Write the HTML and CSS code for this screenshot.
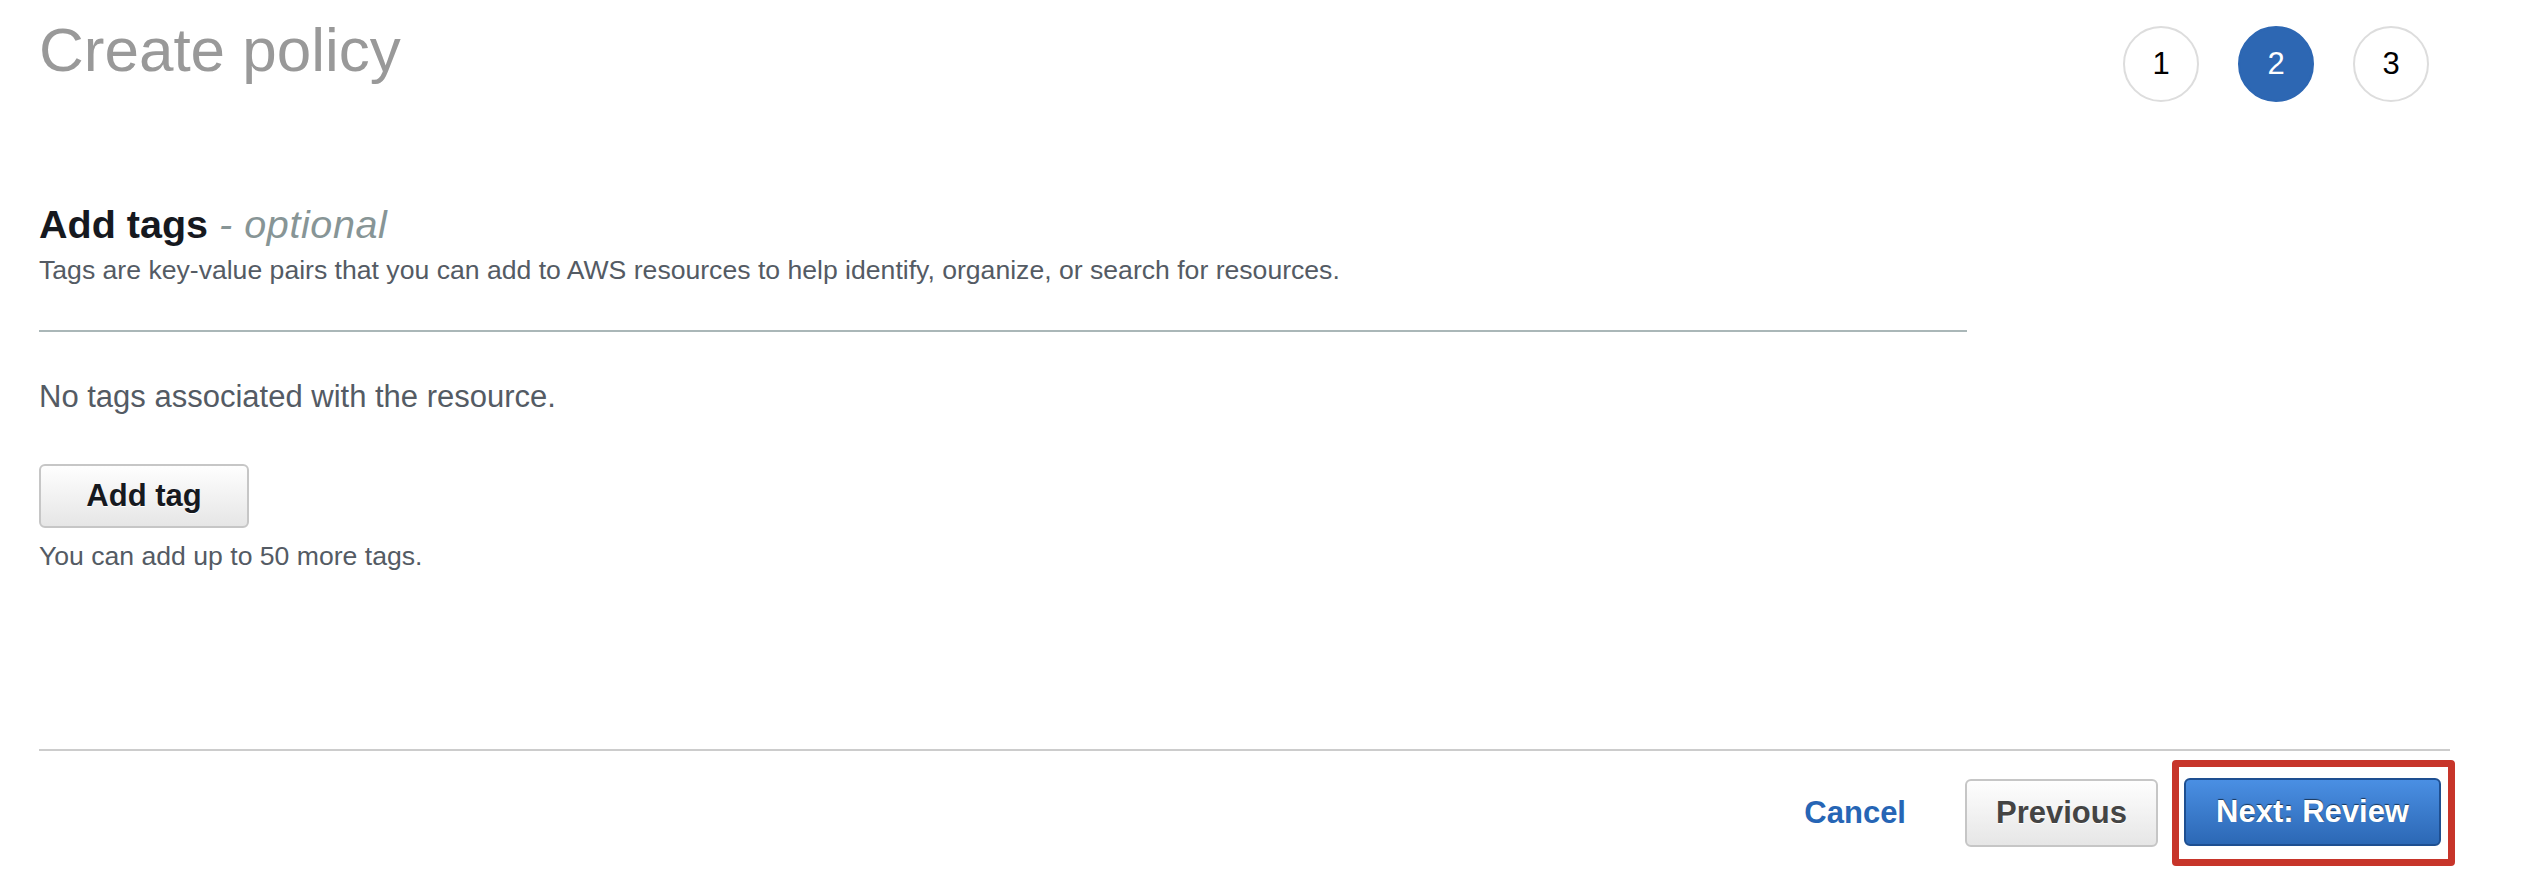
FILE: index.html
```html
<!DOCTYPE html>
<html lang="en">
<head>
    <meta charset="UTF-8">
    <meta name="viewport" content="width=device-width, initial-scale=1.0">
    <title>Create policy</title>
    <link rel="stylesheet" href="styles.css">
</head>
<body>
    <div class="page">
        <div class="header">
            <h1 class="title">Create policy</h1>
            <div class="steps">
                <div class="step">1</div>
                <div class="step active">2</div>
                <div class="step">3</div>
            </div>
        </div>

        <div class="tags-section">
            <h2 class="section-title">Add tags <span class="optional">- optional</span></h2>
            <p class="section-desc">Tags are key-value pairs that you can add to AWS resources to help identify, organize, or search for resources.</p>
            <div class="divider"></div>
            <p class="empty-text">No tags associated with the resource.</p>
            <button class="btn btn-default add-tag">Add tag</button>
            <p class="hint">You can add up to 50 more tags.</p>
        </div>

        <div class="footer">
            <a class="cancel" href="#">Cancel</a>
            <button class="btn btn-default prev">Previous</button>
            <span class="highlight">
                <button class="btn btn-primary next">Next: Review</button>
            </span>
        </div>
    </div>
</body>
</html>
```

FILE: styles.css
```css
body {
    font-family: "Liberation Sans", Arial, sans-serif;
    margin: 0;
    padding: 0;
    background-color: #fff;
}
.page {
    padding: 0 74px 0 39px;
}
.header {
    display: flex;
    justify-content: space-between;
    align-items: flex-start;
    padding-top: 13px;
}
.title {
    margin: 0;
    font-size: 62px;
    line-height: 74px;
    font-weight: normal;
    color: #999;
}
.steps {
    display: flex;
    gap: 39px;
    margin-top: 13px;
    margin-right: 21px;
}
.step {
    width: 72px;
    height: 72px;
    border: 2px solid #ddd;
    border-radius: 50%;
    display: flex;
    align-items: center;
    justify-content: center;
    font-size: 31px;
    color: #000;
}
.step.active {
    background-color: #2d67b3;
    border-color: #2d67b3;
    color: #fff;
}
.tags-section {
    width: 1928px;
    margin-top: 98px;
}
.section-title {
    margin: 0;
    font-size: 39.5px;
    line-height: 48px;
    font-weight: bold;
    color: #16191f;
}
.optional {
    font-weight: normal;
    font-style: italic;
    letter-spacing: 0.6px;
    color: #879596;
}
.section-desc {
    margin: 6px 0 0;
    font-size: 26.6px;
    line-height: 32px;
    color: #545b64;
}
.divider {
    height: 2px;
    background-color: #aab7b8;
    margin-top: 44px;
}
.empty-text {
    margin: 46px 0 0;
    font-size: 31px;
    line-height: 38px;
    color: #545b64;
}
.btn {
    font-family: "Liberation Sans", Arial, sans-serif;
    font-weight: bold;
    border-radius: 6px;
    cursor: pointer;
}
.btn-default {
    border: 2px solid #c6c6c6;
    background: linear-gradient(#fefefe, #e6e6e6);
    color: #16191f;
    text-shadow: 0 1px 0 #fff;
}
.add-tag {
    display: block;
    margin-top: 48px;
    width: 210px;
    height: 64px;
    font-size: 31px;
}
.hint {
    margin: 12px 0 0;
    font-size: 26.6px;
    line-height: 32px;
    color: #545b64;
}
.footer {
    margin-top: 177px;
    border-top: 2px solid #ccc;
    display: flex;
    justify-content: flex-end;
    align-items: center;
    padding-top: 9px;
}
.cancel {
    font-size: 31px;
    font-weight: bold;
    color: #2665b5;
    text-decoration: none;
    margin-right: 59px;
}
.prev {
    width: 193px;
    height: 68px;
    font-size: 31px;
    color: #444;
}
.highlight {
    display: block;
    border: 7px solid #c7352a;
    border-radius: 4px;
    padding: 11px 7px 13px 5px;
    margin: 0 -5px 0 14px;
}
.btn-primary {
    display: block;
    width: 257px;
    height: 68px;
    font-size: 31px;
    color: #fff;
    border: 2px solid #1e4f91;
    background: linear-gradient(#4a8fe3, #2c68b5);
    text-shadow: 0 -1px 1px rgba(0, 0, 0, 0.6);
}
```
